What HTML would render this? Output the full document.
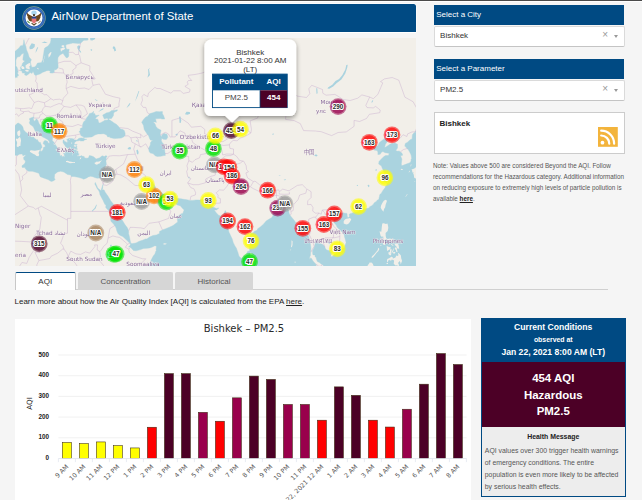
<!DOCTYPE html>
<html lang="en">
<head>
<meta charset="utf-8">
<title>AirNow Department of State</title>
<style>
html,body{margin:0;padding:0;}
body{width:642px;height:500px;overflow:hidden;background:#f5f5f5;position:relative;font-family:"Liberation Sans",sans-serif;color:#222;}
.abs{position:absolute;}
#topbar{left:0;top:0;width:642px;height:1px;background:#4a4a4a;}
#topwhite{left:0;top:1px;width:642px;height:1.2px;background:#fff;}
#hdr{left:14.5px;top:4px;width:401.5px;height:28.4px;background:#004a83;border-radius:2.5px 2.5px 0 0;box-shadow:0 0 0 .6px #fff,0 1.1px 0 0 #fff;}
#hdr .t{position:absolute;left:37px;top:6.1px;font-size:11.4px;line-height:13px;color:#fff;white-space:nowrap;}
#map{left:14.5px;top:38px;width:401.5px;height:228px;background:#f2efe9;overflow:hidden;}
.ph{background:#004a83;color:#fff;font-size:8px;line-height:19.5px;padding-left:2.2px;box-sizing:border-box;white-space:nowrap;}
.sel{background:#fff;border:.6px solid #dadada;border-bottom-color:#c4c4c4;border-radius:2px;box-sizing:border-box;font-size:8px;color:#333;padding-left:5.6px;white-space:nowrap;}
.sel .x{position:absolute;right:16px;top:-.8px;font-size:10px;color:#999;}
.sel .a{position:absolute;right:5.8px;top:8.1px;width:0;height:0;border-left:2.9px solid transparent;border-right:2.9px solid transparent;border-top:3px solid #999;}
#note{left:433px;top:160px;width:195px;font-size:6.3px;line-height:11.1px;color:#555;white-space:nowrap;}
#note b{color:#222;text-decoration:underline;}
.tab{top:272px;height:17.5px;box-sizing:border-box;font-size:8px;line-height:17px;text-align:center;color:#555;background:#d6d6d6;border:.6px solid #d6d6d6;border-bottom:none;border-radius:2px 2px 0 0;}
#learn{left:14.5px;top:296.5px;font-size:8px;line-height:10px;white-space:nowrap;color:#222;}
#learn u{font-weight:normal;}
#chart{left:14.5px;top:318.5px;width:456.5px;height:182px;background:#fff;overflow:hidden;}
#cc{left:481px;top:317.7px;width:144.5px;height:179.6px;box-sizing:border-box;border:.6px solid #004a83;background:#ededed;}
</style>
</head>
<body>
<div id="topbar" class="abs"></div>
<div id="topwhite" class="abs"></div>

<div id="hdr" class="abs">
<svg class="abs" style="left:7.7px;top:2.3px" width="24" height="24" viewBox="0 0 24 24">
<circle cx="12" cy="12" r="11.7" fill="#86a68c"/>
<circle cx="12" cy="12" r="11.1" fill="#2d63b3"/>
<circle cx="12" cy="12" r="9.9" fill="none" stroke="#6f9ad6" stroke-width=".7" stroke-dasharray=".7 .7"/>
<circle cx="12" cy="12" r="8.5" fill="#fdfdfd"/>
<ellipse cx="12" cy="6.7" rx="2.7" ry="2.3" fill="#a9d5ee"/>
<path d="M10.6 10.2 C9 9.6 6.6 8.6 4.9 6.4 C4.6 8.2 5 9.6 5.6 10.6 C5.4 11.6 5.8 12.6 6.5 13.3 C6.6 14.2 7.4 15 8.4 15.2 C9.2 15.6 10 15.4 10.6 14.8Z" fill="#6b471b"/>
<path d="M13.4 10.2 C15 9.6 17.4 8.6 19.1 6.4 C19.4 8.2 19 9.6 18.4 10.6 C18.6 11.6 18.2 12.6 17.5 13.3 C17.4 14.2 16.6 15 15.6 15.2 C14.8 15.6 14 15.4 13.4 14.8Z" fill="#6b471b"/>
<path d="M11 8.6 c.4 -.9 1.6 -.9 2 0 l-.2 1.6 h-1.6z" fill="#3b2a14"/>
<path d="M9.8 11.4 h4.4 v3.4 c0 1.5 -1.1 2.4 -2.2 2.8 c-1.1 -.4 -2.2 -1.3 -2.2 -2.8z" fill="#f5b5b5"/>
<path d="M10.3 12.6 v3.2 M11.15 12.6 v4.3 M12 12.6 v4.8 M12.85 12.6 v4.3 M13.7 12.6 v3.2" stroke="#d8343a" stroke-width=".5"/>
<rect x="9.8" y="10.7" width="4.4" height="1.9" fill="#27408b"/>
<path d="M4.9 14.6 c1.3 .4 2.6 1.5 3.3 2.8 c-1.7 -.1 -3 -1.2 -3.3 -2.8z" fill="#4f8f3f"/>
<path d="M19.1 14.6 c-1.3 .4 -2.6 1.5 -3.3 2.8 c1.7 -.1 3 -1.2 3.3 -2.8z" fill="#9b8a68"/>
<path d="M9.2 17.6 l2.8 2.2 l2.8 -2.2 l-.7 -.9 l-2.1 1.5 l-2.1 -1.5z" fill="#5d4a26"/>
</svg>
<div class="t">AirNow Department of State</div>
</div>

<div id="map" class="abs">
<svg class="abs" style="left:0;top:0" width="401.5" height="228.5" viewBox="14.5 38 401.5 228.5">
<g id="geo">
<path d="M50.4 37.0L50.4 40.3L49.8 42.9L47.5 46.1L44.2 48.0L43.6 50.4L43.2 53.5L42.6 56.5L42.3 59.5L41.0 62.5L39.7 62.8L37.0 63.1L35.4 66.0L33.8 67.1L31.2 67.2L30.9 66.0L30.2 63.4L29.9 61.9L30.9 59.8L28.6 57.1L27.6 53.5L26.0 49.8L25.3 46.1L24.3 44.2L23.4 39.7L23.0 42.9L22.4 45.4L20.1 45.8L18.5 48.0L14.9 51.1L11.6 51.7L11.6 76.7L14.6 76.7L15.2 77.8L15.9 77.2L16.7 77.5L16.8 75.9L18.1 75.6L17.7 74.5L16.8 73.1L17.8 72.2L17.2 70.5L17.0 68.8L16.3 66.8L15.2 66.3L15.4 63.7L15.3 60.4L15.7 59.2L16.8 57.1L19.4 56.5L21.2 54.1L23.4 53.3L23.0 55.0L22.5 58.0L22.4 60.1L24.3 61.0L22.7 62.5L22.1 63.1L21.4 65.4L20.7 66.3L19.8 67.7L20.4 69.4L19.6 70.5L21.4 71.1L21.9 73.1L24.3 73.1L24.2 75.0L26.1 75.4L28.2 74.1L29.6 72.5L31.5 73.4L32.5 71.2L33.5 73.4L33.8 74.5L35.4 75.5L37.0 74.7L39.5 74.0L42.3 72.2L43.9 71.7L46.2 70.7L48.5 70.4L50.1 71.7L49.3 72.2L49.8 73.0L52.0 73.1L53.7 72.5L53.8 69.7L55.6 69.7L57.6 67.7L57.6 65.4L57.4 63.1L57.3 60.7L57.4 57.7L59.1 55.3L62.5 53.2L64.4 55.9L65.7 57.7L67.4 57.4L68.3 55.9L68.2 52.3L68.7 49.3L66.1 49.2L65.4 47.3L65.4 45.8L65.1 45.1L67.0 44.2L69.5 43.8L72.3 43.0L75.2 43.2L78.1 43.5L80.1 43.2L81.4 41.9L83.3 40.3L85.6 40.3L87.6 40.0L87.3 37.0Z M11.6 125.8L14.6 125.6L16.5 123.6L17.9 123.1L20.7 124.7L22.4 127.0L23.0 129.7L25.0 132.1L27.1 133.4L28.7 135.0L30.0 136.3L31.3 137.2L33.1 137.1L34.6 138.9L35.3 138.9L35.6 139.9L36.9 139.6L37.7 141.2L38.7 142.4L39.8 142.3L40.3 143.8L41.1 145.5L41.6 147.6L40.5 148.2L39.8 150.5L40.0 151.2L41.3 151.2L42.8 149.2L42.9 147.6L44.7 146.7L44.5 145.0L42.6 143.8L43.1 141.9L43.9 140.8L45.0 140.5L47.2 141.4L47.5 142.7L48.7 143.4L49.1 141.9L47.5 139.7L45.2 138.4L43.8 137.7L41.0 136.3L41.6 134.3L39.3 134.2L37.7 133.9L35.1 131.8L34.1 129.7L32.8 126.7L30.9 125.3L29.7 124.6L28.8 122.7L29.6 120.8L28.9 119.2L29.1 118.4L31.5 117.5L33.0 116.9L33.7 117.4L32.8 118.1L33.1 119.9L34.1 121.3L35.1 119.9L35.9 118.8L37.4 120.4L38.5 123.6L40.6 126.2L42.4 127.2L44.2 128.3L45.7 129.2L47.8 131.0L49.3 132.1L51.1 133.4L52.0 134.5L52.2 136.8L52.0 138.9L51.7 140.6L53.5 142.3L54.0 143.1L54.7 144.4L56.4 146.9L57.6 149.4L58.4 149.6L57.6 151.5L59.1 152.7L59.4 155.0L59.5 155.8L60.4 156.0L60.8 155.0L61.7 157.2L62.5 156.0L64.1 157.2L63.9 155.0L63.0 153.0L64.4 153.4L65.4 153.2L64.3 151.3L65.7 151.1L67.2 152.3L67.2 150.5L69.0 150.9L67.7 148.4L65.1 146.7L64.8 145.9L63.5 144.2L62.5 142.5L62.5 140.4L63.6 139.8L63.5 141.2L64.9 141.6L66.1 142.8L66.2 141.9L67.0 142.7L66.9 141.2L68.3 141.9L67.0 140.8L66.2 139.5L68.3 138.5L70.6 138.4L73.2 138.9L73.7 139.9L76.2 139.9L74.2 142.3L74.0 142.7L73.7 144.6L75.5 144.4L76.7 144.4L75.7 145.5L76.5 146.9L76.0 148.2L77.1 149.1L75.5 149.4L74.7 148.2L74.5 149.8L76.2 150.7L77.6 151.5L77.5 153.6L78.8 154.0L77.6 154.9L78.1 156.3L80.4 156.0L81.0 155.6L82.0 156.2L83.7 156.5L83.7 157.6L85.5 158.2L87.9 158.0L88.4 156.8L88.9 155.5L91.2 156.0L93.1 156.8L95.7 158.9L99.3 157.8L101.6 155.8L103.9 156.6L105.5 155.6L106.7 156.6L105.5 157.8L105.9 159.3L105.4 161.0L105.8 163.5L105.6 165.2L104.5 167.4L103.6 169.9L102.8 171.6L102.2 174.5L101.1 176.7L99.0 178.1L96.7 178.2L94.1 177.6L92.5 176.7L90.2 176.3L87.7 176.9L86.3 177.9L83.3 179.2L81.1 178.3L77.6 177.3L73.6 176.5L70.8 176.5L70.3 175.0L67.0 174.5L64.1 172.5L62.6 171.8L60.0 171.3L57.1 171.9L54.2 174.3L53.8 177.9L54.7 179.6L52.7 180.9L50.7 181.4L47.5 179.6L42.9 177.9L39.7 176.7L38.4 173.3L35.3 172.3L31.8 171.3L28.2 171.2L26.5 170.3L25.0 169.0L24.7 167.6L21.7 167.4L21.4 165.8L23.8 164.1L24.8 162.3L24.8 161.1L24.1 159.9L23.4 159.7L23.0 157.6L25.0 155.6L24.8 154.7L23.2 155.6L22.4 155.8L21.9 154.2L21.0 153.9L18.8 154.2L17.3 155.2L16.3 155.4L14.6 155.2L11.6 155.2Z M75.8 140.7L78.4 138.3L80.7 137.9L83.2 138.2L84.3 139.1L86.3 139.3L84.3 139.7L83.0 140.9L80.1 141.0L79.4 140.4L77.8 140.8L75.8 141.1Z M83.7 137.3L80.4 135.6L80.1 134.4L79.1 131.9L78.4 131.7L79.8 130.8L79.8 128.5L82.0 127.6L82.0 125.8L82.2 124.2L83.2 121.8L85.5 119.7L85.8 118.3L87.3 116.4L88.2 115.3L89.0 113.6L91.5 112.9L93.1 111.2L92.8 113.4L94.1 113.4L95.1 115.5L98.0 115.3L98.7 115.3L96.4 116.7L94.7 118.8L97.5 119.4L98.0 122.2L98.8 123.1L100.1 122.7L102.9 121.2L104.2 120.2L107.6 119.9L107.8 118.8L106.2 118.3L103.9 119.0L102.9 116.9L102.2 115.0L104.0 114.1L105.8 112.9L108.8 112.2L111.2 110.6L113.7 110.5L115.8 110.0L116.9 109.8L116.6 111.0L114.5 111.7L113.5 112.4L113.0 113.8L113.0 115.5L111.7 117.4L110.7 118.8L108.9 118.4L108.4 119.0L108.6 119.9L108.3 119.9L109.4 120.1L110.4 120.8L112.0 121.8L112.8 122.4L116.2 124.5L118.3 126.8L120.0 129.0L122.5 129.4L123.9 130.8L124.6 133.2L124.6 135.4L123.4 136.7L120.8 138.1L118.3 138.2L114.0 138.6L112.4 138.2L109.4 137.6L109.3 136.7L107.2 136.9L106.2 135.1L103.4 133.7L99.6 133.9L97.4 133.9L94.4 135.0L92.5 136.3L91.2 136.9L87.6 137.3L85.3 137.4Z M145.3 116.9L143.0 119.4L141.2 122.2L143.0 125.4L143.7 129.4L146.3 133.6L148.1 135.8L149.0 138.2L149.8 139.9L152.9 140.8L151.3 141.1L150.0 142.5L149.8 145.0L148.4 147.8L148.1 149.1L148.9 152.1L150.0 153.1L152.5 153.6L154.7 155.8L156.7 156.4L160.4 156.2L163.2 155.6L164.8 155.4L164.7 153.6L164.2 150.9L164.4 147.1L162.2 145.3L163.2 144.0L161.6 142.5L160.8 140.4L161.3 138.2L162.9 139.3L165.8 139.5L167.3 137.3L166.5 134.3L163.5 133.4L161.4 135.0L161.1 137.1L159.8 135.0L159.8 133.4L160.6 130.3L157.2 128.5L155.5 126.5L154.6 124.0L152.8 122.1L154.7 122.0L155.9 122.4L155.4 120.4L155.1 118.8L159.9 118.5L161.6 119.0L164.2 119.0L163.2 115.7L161.9 113.8L161.9 111.5L159.0 111.7L155.7 111.5L152.5 112.7L149.5 113.6L148.2 114.8L146.9 116.4Z M147.7 268.7L147.7 266.4L148.9 264.4L149.7 262.1L151.3 258.8L152.8 255.9L154.4 253.9L155.4 250.9L156.4 250.7L155.5 250.2L155.7 248.3L156.0 246.2L154.4 245.7L151.8 247.1L149.2 247.9L146.6 248.3L143.0 248.4L140.1 249.6L135.5 250.8L132.9 250.4L130.5 247.8L129.5 246.9L128.0 247.1L129.3 245.8L130.0 244.3L129.3 243.1L128.2 242.3L126.4 240.2L124.4 238.6L122.3 236.5L119.9 235.5L118.4 234.5L117.5 233.5L116.3 230.8L115.6 228.1L114.1 225.3L112.2 223.1L110.6 221.4L110.1 219.8L110.1 216.3L109.7 213.9L108.3 210.7L105.2 207.6L105.5 204.7L104.4 204.5L102.6 200.5L100.6 196.8L99.4 194.4L99.1 192.6L98.2 190.6L96.6 188.5L95.3 185.7L94.3 183.9L94.9 182.5L95.4 183.9L96.7 186.7L97.0 187.8L98.4 189.0L100.5 190.8L100.7 190.2L101.3 188.0L101.9 186.1L102.7 184.2L102.2 186.5L102.1 188.4L101.6 189.7L103.6 189.9L104.7 192.2L107.6 196.3L110.2 200.8L112.8 204.1L115.3 207.9L115.9 208.6L116.4 213.2L118.2 216.7L120.2 217.9L122.6 221.5L124.4 224.6L126.7 227.6L127.5 229.1L128.3 232.1L128.0 233.2L128.8 236.2L129.8 241.2L130.4 243.4L132.2 243.6L135.5 242.9L138.8 241.2L142.0 240.2L145.0 238.9L146.4 238.9L149.0 237.1L152.5 235.5L155.9 234.9L159.0 233.5L159.0 231.5L161.9 229.9L165.2 228.7L168.9 227.2L172.5 225.6L177.2 221.9L176.9 219.6L177.4 216.7L180.2 213.9L182.3 213.4L183.7 209.7L182.8 209.3L180.8 206.9L179.7 205.7L176.9 204.9L173.8 203.1L172.5 200.4L172.5 198.6L172.8 195.9L171.8 197.0L171.4 198.1L169.1 199.8L166.1 202.7L163.5 204.0L160.3 203.8L157.0 204.0L156.0 202.4L156.9 200.8L156.9 199.7L157.0 197.5L155.9 196.6L154.6 198.6L154.4 201.1L154.2 201.9L152.5 199.0L152.5 196.1L151.8 194.6L150.5 193.3L148.2 191.0L147.1 188.4L145.9 186.1L145.3 184.8L144.5 184.7L145.6 183.9L145.9 182.6L147.1 182.6L148.4 181.3L149.2 180.7L150.5 182.2L152.5 182.6L152.8 183.9L154.6 186.3L156.0 190.4L158.2 190.5L160.3 191.9L162.9 194.1L166.0 195.0L167.8 195.2L170.1 194.4L172.2 192.9L174.3 193.2L174.9 195.0L175.6 197.4L177.1 198.4L180.5 198.8L183.1 199.3L186.4 199.7L189.3 200.4L192.0 200.4L195.7 199.9L199.4 200.1L202.3 199.3L204.9 199.2L206.1 199.3L206.2 201.3L207.2 201.5L208.5 203.3L209.2 204.7L211.1 205.8L212.4 207.0L216.0 208.6L217.3 208.3L218.3 208.1L216.0 209.9L213.7 210.0L215.7 212.7L218.1 215.3L220.3 216.0L222.5 215.0L224.0 212.3L224.8 210.6L225.8 212.7L226.1 214.4L226.3 217.0L226.0 219.8L226.2 222.1L226.8 225.3L227.8 228.7L228.4 232.1L229.4 234.0L230.4 236.2L231.7 238.9L232.8 242.7L234.4 246.0L235.8 248.1L236.6 250.2L237.4 252.4L238.4 255.9L239.7 257.5L241.6 258.6L243.6 256.2L246.3 254.7L247.3 254.5L246.2 253.4L247.3 251.2L249.2 251.2L249.1 249.7L249.0 245.8L250.5 242.0L250.1 238.9L249.8 235.5L250.4 233.2L252.5 233.0L253.5 231.5L257.1 230.1L256.9 228.9L260.4 226.4L263.1 224.1L265.6 221.0L268.7 219.1L271.4 217.4L272.4 215.7L272.4 213.4L274.9 212.7L276.0 212.5L278.6 212.9L280.9 212.3L283.2 212.0L284.5 210.0L285.5 209.3L287.1 209.3L288.1 210.4L288.7 213.4L289.9 215.8L291.7 217.9L293.8 220.5L295.2 222.6L296.4 224.3L296.5 227.0L297.0 229.4L296.1 232.1L297.8 232.8L300.1 233.2L302.4 231.5L304.4 229.1L305.0 227.9L305.7 229.6L307.0 230.5L307.3 234.5L308.6 238.6L309.9 244.1L310.4 247.9L310.1 252.2L309.9 255.5L309.1 257.2L309.3 259.5L310.2 257.8L311.2 258.8L312.5 261.1L313.8 262.6L315.1 263.8L315.5 264.7L315.9 266.4L315.9 268.7Z M323.6 268.7L323.6 266.4L322.0 264.7L320.7 263.9L318.9 262.5L316.8 261.5L315.8 258.8L315.6 257.2L314.6 256.9L314.5 254.9L312.5 254.9L312.2 253.7L312.0 250.6L313.3 248.3L314.1 246.3L314.6 243.8L314.8 241.6L315.8 240.6L316.8 240.5L317.9 241.1L317.6 242.5L317.7 243.4L319.0 243.4L321.6 244.1L323.1 245.3L324.3 246.8L324.9 248.6L326.2 250.1L328.5 250.4L329.5 250.9L331.4 252.2L330.6 254.5L330.4 256.5L330.2 256.9L332.1 256.2L333.5 254.7L335.3 253.6L336.8 251.9L337.0 251.1L337.9 251.1L339.6 250.4L341.2 249.2L344.0 247.8L344.1 247.0L344.8 244.8L345.6 242.6L344.9 239.7L344.1 236.9L343.8 235.0L341.7 231.9L339.6 230.3L336.5 227.0L335.7 225.0L333.5 222.6L334.0 219.1L335.0 218.4L336.3 217.4L337.0 215.7L337.9 215.1L338.9 214.8L340.9 213.2L342.8 212.7L344.5 213.3L346.1 213.2L346.6 213.9L346.6 215.3L347.1 217.5L348.1 217.6L349.0 216.5L348.7 214.3L350.0 213.6L350.7 213.4L353.3 212.5L356.5 212.0L357.8 211.3L359.0 210.7L359.1 208.8L360.1 209.7L361.1 210.4L362.4 209.2L364.8 208.7L368.6 208.1L369.2 206.7L371.2 205.8L372.5 204.7L373.8 202.8L375.8 201.5L376.7 200.2L378.4 199.2L378.7 197.2L378.9 196.8L379.3 194.6L380.7 193.5L381.8 191.5L382.8 189.9L384.7 187.6L385.2 185.8L386.4 185.0L386.5 183.0L385.1 182.2L382.9 181.3L384.2 179.8L386.2 179.1L384.9 177.1L386.2 175.9L385.2 174.5L383.9 173.1L383.1 171.3L381.6 167.8L381.0 166.0L378.2 164.1L378.5 161.5L381.1 158.8L383.7 156.2L385.1 155.6L387.9 155.5L388.8 153.4L386.8 153.0L384.6 152.7L382.4 151.6L381.0 152.3L379.7 154.2L377.4 154.6L377.4 151.9L376.6 150.5L373.5 150.1L373.0 149.4L372.7 146.7L375.1 146.7L377.4 145.7L378.7 142.8L382.8 139.5L383.6 138.9L385.9 138.6L386.8 139.7L386.8 141.6L384.9 144.2L384.1 147.6L385.4 147.1L389.8 144.0L394.2 143.1L397.0 144.2L397.0 148.0L395.2 150.5L397.3 151.3L398.6 150.9L401.5 153.2L402.2 155.2L400.0 155.8L401.4 159.1L400.8 163.9L401.2 165.8L405.3 164.3L405.8 164.1L409.5 162.7L410.6 161.1L410.6 159.1L411.2 158.7L410.6 155.0L409.7 153.0L409.0 151.8L408.0 150.1L404.3 146.1L404.8 143.4L406.7 142.4L410.0 139.6L411.6 138.9L411.9 134.8L413.6 132.8L414.9 132.5L415.2 131.0L415.9 130.8L419.1 129.9L419.1 268.7Z" fill="#aad3df" stroke="#aad3df" stroke-width=".4" stroke-linejoin="round"/>
<path d="M75.8 140.8L74.2 142.5M83.3 138.2L83.7 137.1" stroke="#aad3df" stroke-width=".8" fill="none"/>
<path d="M25.0 65.4L26.9 63.9L28.9 63.1L29.9 63.5L29.9 65.5L28.6 66.8L29.4 68.0L28.9 69.6L26.9 68.8L25.3 68.3Z M20.7 66.5L22.4 65.9L24.0 67.7L23.7 69.1L21.7 69.0L20.9 68.0Z M24.7 70.3L26.3 69.7L28.2 70.0L27.8 71.8L26.0 71.5L24.7 70.8Z M36.7 67.8L38.2 68.6L38.0 69.4L36.7 68.8Z M42.3 62.5L42.8 62.2L44.5 55.6L44.1 55.9Z M47.8 57.7L48.8 57.0L50.1 55.0L51.1 52.3L49.8 52.3L47.8 54.7L48.1 57.1Z M59.9 48.6L60.5 51.7L61.5 50.4L63.8 49.5L64.8 48.0L63.5 47.6L61.2 48.3Z M60.7 46.1L62.5 44.9L63.9 45.8L63.5 47.2L61.8 47.2Z M19.3 129.4L19.6 130.8L19.9 133.4L19.4 135.6L18.7 136.6L17.5 135.8L16.8 134.3L16.7 132.3L17.3 131.3L18.5 130.6L19.2 130.8Z M18.8 137.1L19.9 137.8L20.6 140.4L20.2 142.5L19.9 146.1L18.5 145.9L17.7 147.2L16.3 146.5L16.2 145.0L16.7 142.9L16.2 141.2L15.4 139.9L15.5 138.4L16.8 138.9L17.8 138.2Z M29.6 150.7L30.4 150.3L32.3 150.4L34.4 150.8L37.4 150.3L39.5 149.8L38.7 151.5L38.0 153.0L38.7 154.8L38.0 156.3L36.1 155.9L34.3 154.6L33.0 153.9L30.9 152.7L29.3 151.7Z M65.6 161.1L65.4 162.1L67.0 162.3L69.5 163.3L71.9 163.1L74.4 163.1L74.5 161.9L72.7 162.3L71.8 161.9L70.7 161.7L68.7 161.6L67.4 160.8L66.2 161.0Z M94.0 162.7L94.4 164.1L96.4 164.8L98.5 163.6L99.9 163.2L99.5 162.5L101.6 160.3L98.5 161.6L97.4 161.7L96.2 161.5L94.9 162.4Z M79.2 159.5L79.6 157.8L80.8 157.2L80.4 158.7Z M73.1 145.9L74.2 145.1L75.5 145.5L75.4 146.7L73.9 146.5Z M73.1 148.6L74.0 148.5L73.9 150.1L73.2 149.9Z M55.1 149.6L56.0 149.0L56.6 150.3L55.6 150.7Z M52.9 143.6L53.8 143.4L54.3 145.0L53.5 144.8Z M70.5 142.7L71.6 142.5L71.6 143.4L70.6 143.4Z M75.5 151.7L77.0 151.9L76.7 152.3L75.5 152.2Z M71.4 154.4L72.3 154.4L72.1 155.2L71.6 155.2Z M69.3 151.1L70.1 151.3L70.0 152.1L69.5 151.9Z M76.8 155.6L77.8 155.5L77.8 156.0L76.8 156.2Z M68.8 139.3L69.6 139.2L69.5 139.9L68.8 139.9Z M249.1 253.1L250.4 252.8L252.4 254.9L253.6 257.0L255.1 259.8L255.7 262.1L255.0 263.9L253.3 265.0L251.4 265.6L250.3 265.3L249.5 263.5L249.1 262.4L249.0 260.5L248.8 258.2L249.3 255.9L249.8 254.2Z M162.6 243.8L164.2 243.3L166.5 243.8L164.8 244.5L163.2 244.4Z M291.0 240.2L292.1 241.2L292.0 244.9L291.3 247.3L290.5 246.9L291.0 243.9Z M290.0 249.2L290.7 249.7L290.3 250.6L289.9 250.2Z M294.3 261.5L295.1 261.8L294.8 262.9L294.1 262.5Z M179.8 216.2L181.0 216.7L180.2 217.9Z M153.3 196.3L153.9 196.4L153.8 197.9L153.4 197.7Z M169.1 195.0L171.0 193.7L172.3 193.7L171.0 194.6Z M419.1 167.2L415.4 167.2L413.9 168.6L412.5 169.1L411.0 169.6L411.6 170.5L411.9 172.5L413.3 172.5L412.6 173.6L413.3 174.8L413.6 177.6L414.8 178.6L419.1 176.9Z M343.2 221.2L343.2 223.6L345.8 224.6L347.6 224.0L349.0 222.6L350.8 219.6L349.5 217.9L347.7 218.4L345.9 218.8L344.8 219.3L343.8 220.2Z M385.1 199.7L386.5 200.8L386.0 202.2L385.2 204.4L384.6 207.6L383.7 208.8L382.8 211.8L382.3 211.1L381.0 209.3L380.2 207.7L380.5 205.8L381.3 204.0L382.3 202.2L383.3 200.8L384.6 200.1Z M381.8 223.6L383.3 223.2L385.4 224.1L387.0 223.6L387.5 225.7L387.8 227.7L387.2 231.1L385.1 233.0L385.2 235.9L385.7 238.2L387.2 239.1L389.5 238.6L390.8 238.9L392.9 239.7L391.7 241.1L393.4 242.3L393.4 243.8L392.6 242.8L390.8 242.3L389.8 240.6L388.6 241.6L387.7 240.2L385.2 239.2L383.4 240.2L382.0 239.4L382.0 237.9L382.9 237.4L383.2 236.9L382.0 236.2L381.6 237.4L380.8 236.2L380.2 236.0L379.7 234.3L379.3 232.5L379.2 231.1L380.7 232.0L381.0 230.1L381.3 226.9L381.5 225.3Z M381.0 240.6L383.3 240.6L384.9 241.9L385.1 243.6L384.1 244.9L382.6 244.6L382.4 242.6Z M370.9 257.5L372.2 257.7L374.5 254.9L375.9 253.1L377.7 251.2L378.7 249.6L378.5 247.8L377.7 248.3L377.1 250.2L375.4 252.2L373.5 254.5L371.8 255.9Z M379.5 244.9L381.0 245.1L380.8 245.8L379.7 245.6Z M386.2 245.9L388.5 247.1L390.3 247.3L389.8 249.1L388.3 249.9L386.5 250.9L386.4 248.9Z M389.6 249.2L391.2 249.2L390.9 251.2L390.3 253.6L390.8 254.5L389.8 255.4L388.1 254.2L387.8 252.6L389.3 251.9L389.5 250.6Z M393.2 248.0L393.0 250.6L392.7 251.2L391.1 254.1L391.1 252.6L391.9 250.9L392.6 248.9Z M392.4 252.6L393.7 251.7L395.0 252.4L394.3 253.6L392.7 253.6Z M394.5 247.3L396.3 248.1L396.5 249.7L397.1 252.2L395.5 251.6L395.5 250.1L394.3 248.9Z M394.0 243.8L397.3 243.6L398.1 245.3L398.7 248.8L397.0 248.6L396.3 247.8L395.8 246.3L394.5 245.3Z M390.4 243.8L391.7 244.3L393.2 245.9L391.7 245.6L390.6 244.6Z M386.7 262.5L386.4 261.1L386.8 259.0L388.6 258.3L390.9 256.8L392.1 256.9L392.4 258.5L393.9 258.0L395.2 257.2L395.6 255.5L396.8 256.0L397.9 255.5L397.6 253.1L398.1 252.9L399.6 254.5L400.4 255.5L400.7 258.2L401.4 260.2L401.5 261.1L400.2 264.4L399.9 262.5L399.1 261.0L398.3 262.0L397.6 263.1L398.4 264.7L398.1 268.7L397.3 268.7L397.0 265.2L395.0 265.4L393.2 263.8L393.5 261.6L393.4 260.2L391.2 259.5L390.8 260.5L389.3 260.5L389.1 259.7L388.1 260.0L387.7 261.3Z M385.9 263.3L387.5 263.1L387.5 263.9L386.0 263.9Z M367.0 268.7L367.1 265.4L368.6 263.4L369.4 262.3L370.2 262.8L371.0 262.5L372.5 264.1L372.7 265.4L373.8 265.9L375.4 266.7L376.1 268.7Z M400.0 169.8L401.2 168.8L402.7 169.2L401.5 170.1Z M410.0 166.4L410.5 166.2L411.0 164.3L410.3 164.5Z M404.9 196.8L405.4 196.8L407.1 194.1L406.6 194.1Z M408.0 172.5L409.0 172.1L409.7 170.5L408.9 170.9Z M413.9 180.9L414.7 180.9L414.6 181.6L413.9 181.6Z M415.4 180.9L416.0 179.4L416.2 180.1Z M384.2 175.8L386.2 176.5L385.2 176.7Z M386.4 182.0L387.5 181.8L387.5 182.6L386.5 182.6Z" fill="#f2efe9"/>
<path d="M28.9 47.0L31.2 43.2L34.4 44.2L34.1 47.0L31.8 48.9L29.2 49.2Z M35.1 53.0L36.4 50.4L37.7 47.6L36.7 47.3L35.4 50.4Z M41.0 42.6L44.2 41.6L47.2 42.9L44.2 42.9Z M76.7 46.4L78.3 45.3L79.9 46.4L78.8 49.5L80.4 51.4L80.7 52.6L79.8 52.6L78.3 50.4L77.0 48.6Z M89.5 37.0L89.9 40.3L91.8 40.6L94.4 39.3L95.1 37.0Z M89.9 49.8L90.8 48.9L91.8 50.1L90.8 51.1Z M112.0 48.0L113.3 46.1L114.6 47.3L115.6 50.4L114.0 51.4L113.3 49.2Z M326.9 88.5L328.8 88.8L332.7 86.4L336.0 83.2L340.9 79.4L344.8 73.4L346.7 67.7L347.2 64.8L345.8 65.1L344.8 69.4L341.9 75.0L338.6 78.9L335.0 81.0L331.8 84.8L327.8 87.2Z M316.1 93.9L317.1 93.2L316.8 88.5L315.8 88.0L315.8 91.1Z M289.7 94.2L291.3 93.4L293.0 94.7L291.3 95.7Z M228.4 119.0L228.1 116.7L230.7 114.3L233.3 111.9L236.6 112.2L239.8 112.9L243.1 113.1L247.0 112.9L247.0 114.1L243.1 114.3L239.8 114.1L236.6 113.6L234.0 113.4L231.7 116.2L230.0 119.0Z M237.2 131.9L239.8 130.6L244.1 130.6L244.1 132.3L239.8 133.4Z M253.8 114.8L255.5 113.8L256.4 115.7L254.8 116.2Z M260.0 106.2L262.6 105.2L265.6 106.4L262.6 107.4Z M184.4 114.3L186.0 111.7L189.3 111.9L189.6 113.8L187.0 114.8Z M178.5 116.7L179.8 116.2L180.8 120.4L180.2 123.1L179.0 122.7L178.9 119.4Z M127.0 148.4L128.7 146.9L130.6 147.4L130.3 149.2L128.3 149.4Z M135.8 150.5L137.1 149.6L138.1 152.1L137.8 154.2L136.5 154.2L136.2 152.1Z M135.5 139.9L136.8 140.4L137.5 141.6L136.2 141.4Z M97.0 146.7L98.3 146.9L98.0 148.4L97.4 148.2Z M104.4 175.8L104.9 175.8L104.7 178.2L104.2 178.0Z M95.7 204.7L96.4 204.7L95.1 208.6L91.8 211.4L91.2 211.1L94.1 207.9Z M109.4 245.6L110.6 244.6L111.4 245.6L110.4 246.8Z M34.1 240.9L36.1 240.9L36.7 242.6L34.8 243.1Z M313.5 155.4L315.5 154.2L317.2 155.4L315.8 156.6Z M326.5 241.4L327.5 241.2L329.5 243.6L328.8 244.3L327.8 242.9Z M379.7 177.5L381.0 176.7L382.0 178.0L380.7 178.8Z M367.0 185.0L368.3 184.7L369.2 186.1L367.9 187.3Z M355.9 186.1L357.5 184.7L357.5 186.1Z M370.9 102.2L371.8 100.2L372.8 100.7L371.5 102.7Z M126.0 108.1L128.7 105.7L130.0 103.2L129.0 103.2L127.3 105.7Z M134.5 101.7L137.1 96.2L138.8 91.1L138.1 91.1L136.2 96.2Z M146.9 77.8L149.5 75.0L148.5 69.4L149.5 67.7L147.6 69.4L147.9 73.9Z M97.7 111.9L100.3 109.5L103.2 108.1L102.6 109.5L99.6 111.0Z M94.1 98.7L95.7 99.7L97.4 101.0L95.4 100.5Z M283.2 179.8L285.1 179.2L285.5 180.1L283.8 180.3Z M278.0 175.6L279.9 175.2L279.6 176.1Z M374.8 169.8L376.1 169.0L376.4 170.5L375.1 170.7Z M271.4 133.9L273.4 133.4L273.4 134.5L271.8 134.5Z M187.7 177.1L189.0 176.7L188.6 179.0Z M174.9 134.3L176.9 133.4L177.2 135.2L175.6 135.6Z M205.6 138.6L208.8 138.2L210.5 139.1L207.2 139.5Z" fill="#aad3df"/>
<path d="M35.4 75.6L35.7 78.9L34.9 81.3L36.6 82.9L36.9 88.5L37.7 91.6 M37.7 91.6L35.4 91.6L31.2 93.9L28.6 94.7L29.6 96.7L33.8 102.5 M37.7 91.6L41.0 92.9L43.9 94.7L46.5 94.7L50.3 98.7 M33.8 102.5L37.7 101.2L43.9 102.7 M43.9 102.7L47.5 100.7L50.3 98.7 M33.8 102.5L31.2 108.6L28.6 107.9L23.0 108.6L20.1 108.6L16.5 108.1L13.6 108.1 M17.2 70.0L19.6 70.5 M11.6 116.2L16.2 113.8L18.1 116.4L19.8 114.3L22.9 113.1L22.9 111.7L28.6 111.0L29.2 112.4L33.5 113.3L33.1 116.7 M20.1 108.6L19.9 110.7L22.9 111.7 M33.5 113.3L37.7 112.8L41.3 111.7L42.6 108.6L44.5 106.2L43.9 102.7 M44.5 106.2L50.1 107.1L53.7 105.4L58.6 103.5L61.0 104.2L62.3 100.7 M50.3 98.7L53.3 100.2L54.3 99.5L59.2 99.2L62.3 100.7L62.8 98.2L67.4 93.2L65.7 88.5L65.7 85.3L66.7 82.1L65.4 75.3L63.1 73.0L53.3 72.5 M63.1 73.0L62.5 69.1L58.2 68.0 M65.4 75.3L68.3 75.6L72.6 73.4L72.3 70.0L75.5 67.7L75.5 65.6L80.6 62.8L79.1 55.3L78.0 54.4L78.4 50.4L80.1 42.9 M57.4 63.2L63.5 61.3L70.0 61.3L75.5 65.6 M68.2 52.5L72.3 52.3L75.2 54.7L78.0 54.4 M80.6 62.8L89.5 66.0L89.2 70.5L94.7 78.9L91.2 79.4L92.5 85.3 M65.7 88.5L70.3 86.4L78.4 88.5L84.0 88.0L88.6 89.5L92.5 85.3L99.0 84.0L104.9 94.2L112.7 96.7L119.5 98.2L118.5 103.2L118.5 106.6L113.7 108.3L113.3 110.5 M75.5 104.9L80.7 105.2L83.8 106.4L86.3 111.9L86.9 113.8L80.7 118.3L85.5 119.4 M75.5 104.9L78.4 108.6L80.4 111.9L80.7 118.3 M61.0 104.2L63.5 106.4L70.0 107.4L75.5 104.9 M63.5 106.4L57.9 113.8L54.8 115.1L50.4 116.1L45.8 116.0L42.6 113.4L41.3 111.7 M33.1 118.1L38.7 118.1L39.8 114.8L42.6 113.4 M40.1 119.4L43.9 119.2L50.4 120.4L50.7 121.1L52.0 124.0L51.4 127.2L48.9 131.4 M40.1 119.4L40.1 121.3L46.2 129.4L48.9 131.4 M50.4 116.1L50.7 121.1 M54.8 115.1L58.6 119.4L62.1 121.8L62.6 124.0L63.5 125.6L71.9 126.5L77.5 124.5L82.0 126.1 M62.6 124.0L61.8 129.4L61.7 132.5L63.5 136.7L68.7 136.0L74.7 135.2L80.1 133.9 M51.4 127.2L55.0 130.1L54.3 131.4L52.7 131.4L51.9 134.4 M54.3 131.4L56.0 134.4L55.6 136.9L57.1 138.9L54.0 143.8 M56.0 134.4L59.2 132.8L61.7 132.5 M55.0 130.1L57.9 128.5L59.2 132.8 M57.1 138.9L63.5 136.7 M74.7 135.2L75.5 136.9L73.7 139.3 M25.0 44.8L27.3 40.3L29.6 36.4 M119.2 127.6L127.3 128.5L132.2 131.2L140.1 134.3L143.0 136.9L147.2 134.5 M124.3 136.0L127.7 135.8L130.4 137.8L135.5 137.1L140.4 137.8L140.1 134.3 M130.4 137.8L131.3 142.1L134.8 143.8L133.2 149.2L134.8 154.2L127.0 154.6L119.2 155.8L112.7 155.6L108.4 156.2L106.8 159.1L105.9 159.3 M135.5 137.1L137.5 139.1L138.8 145.5L140.4 147.1 M134.8 143.8L140.4 147.1L145.3 143.8L148.2 149.0 M127.0 154.6L123.1 163.9L115.3 169.5L108.8 173.6L105.3 171.9 M106.1 164.5L108.1 166.2L105.7 169.4L103.2 170.5 M104.9 172.1L104.5 176.7L102.9 184.1 M100.5 177.5L102.6 184.3 M115.3 169.5L116.6 174.2L109.4 176.7L112.7 180.5L111.0 182.4L106.2 185.4L102.9 184.8 M116.6 174.2L120.5 175.0L126.0 178.2L134.5 185.4L140.4 185.8L143.7 187.8L146.6 187.8 M140.4 185.8L144.3 182.0L145.3 182.4 M134.8 154.2L136.8 159.1L139.4 162.7L136.8 167.0L138.8 170.9L145.0 175.6L144.3 178.6L147.1 182.6 M128.3 230.8L129.6 227.4L132.9 227.4L140.4 227.9L143.7 228.7L148.5 223.3L158.3 221.9L168.1 218.4L170.2 211.4L168.8 209.0L160.3 208.1L157.0 204.0 M154.4 201.7L155.7 202.2 M168.8 209.0L170.7 203.7L171.7 201.7L172.5 201.0 M158.3 221.9L161.9 229.9 M164.5 153.6L167.4 153.4L171.4 150.5L175.3 149.9L179.2 152.3L182.1 153.0L185.4 156.4L188.1 156.4L188.3 160.7L186.4 165.8L187.3 169.0L186.2 171.3L187.2 176.7L190.3 178.6L187.2 182.9L190.3 187.6L193.5 188.9L195.2 192.8L194.8 195.0L190.4 196.4L189.6 200.1 M187.2 182.9L192.6 184.7L197.8 184.7L204.9 182.8L205.3 179.0L210.5 176.3L214.7 175.2L215.4 170.9L218.0 169.8L217.0 167.0L220.6 166.8L222.2 162.3L220.9 159.1L225.2 155.8L230.0 155.6L233.0 154.2 M188.3 160.7L191.9 162.3L194.5 159.7L199.1 157.8L200.0 154.6L205.6 153.6L209.8 154.2L214.7 154.6L217.7 152.5L218.0 149.2L221.2 149.6L222.2 155.0L226.1 154.0L233.0 154.2 M205.6 153.6L205.9 150.9L198.1 146.7L192.2 142.5L190.6 137.3L184.7 136.5L184.4 133.0L179.5 130.8L174.6 136.9L171.4 136.9L169.7 137.1L167.9 133.9L164.8 132.3L159.8 135.0 M171.4 136.9L171.4 120.4L179.8 117.8L187.7 123.1L190.9 127.2L200.4 126.3L204.3 129.4L204.0 133.9L205.6 134.3L210.2 137.6L210.8 139.1L213.7 136.9L217.7 133.9L220.3 132.5L220.3 131.2L228.4 132.1L228.4 129.4L231.0 128.5L235.9 129.9L247.0 130.3L250.4 133.0 M250.4 133.0L244.4 136.5L239.5 138.2L236.6 140.8L232.6 140.4L229.4 143.4L228.9 144.8L229.4 148.4L233.0 149.0L233.0 154.2 M228.9 144.8L222.9 145.5L218.6 144.2L214.7 144.6L214.7 141.6L218.6 141.2L218.3 138.2L222.5 136.3L227.1 138.9L222.5 141.6L219.0 141.6 M209.8 154.2L210.5 150.1L211.8 150.1L209.5 146.7L208.5 144.6L212.4 144.2L212.4 141.9L214.7 141.6 M220.3 132.5L218.3 138.2 M149.2 114.1L146.9 112.7L145.3 107.4L142.7 107.4L140.4 104.2L142.0 100.2L141.4 96.7L143.3 94.4L147.2 96.7L147.9 93.2L154.4 87.4L156.4 88.5L159.6 88.5L163.2 90.1L166.8 91.6L170.4 93.2L173.0 90.8L179.8 90.8L182.8 93.4L189.0 92.1L189.6 89.5L184.4 86.4L187.7 84.3L186.7 82.1L188.0 80.5L191.2 80.5L188.3 77.2L187.7 75.3L194.5 74.5L201.4 73.1L211.1 69.4L219.6 67.7L220.3 74.5L228.4 75.0L230.0 77.2L238.2 73.9L239.5 72.8L242.8 78.9L249.6 92.1L254.5 92.4L260.7 91.1L266.6 98.2L271.8 97.2L273.6 100.7 M273.6 100.7L268.5 104.2L267.5 110.7L259.4 110.0L257.1 118.1L252.2 119.9L249.6 120.8L250.9 129.2L250.4 133.0 M273.6 100.7L275.0 100.2L281.2 96.7L289.7 92.1L297.2 96.2L306.0 97.5L309.3 93.7L308.3 88.8L311.2 85.3L322.0 89.5L322.3 93.2L325.6 95.2L334.4 94.4L337.6 96.2L342.5 99.5L349.7 100.5L357.2 98.2L361.4 94.9L369.2 97.0 M275.0 100.2L277.6 105.2L282.2 106.6L285.5 112.9L285.1 119.4L293.6 120.6L299.8 123.6L303.1 130.6L314.8 131.0L320.7 131.7L331.1 135.6L337.6 132.5L345.8 131.9L353.6 126.3L353.6 120.4L359.1 121.5L366.0 118.5L368.9 114.3L379.3 112.7L379.7 110.0L375.1 106.4L372.8 107.9L366.6 107.6L365.3 105.4L369.2 97.0 M369.2 97.0L372.8 98.7L377.4 94.4L380.3 87.4L382.3 82.9L380.0 81.6L383.9 78.9L391.7 77.5L398.3 80.2L404.4 97.2L412.6 101.7L415.9 107.6L420.8 107.6 M415.9 120.4L416.5 127.2L414.6 131.9 M394.2 142.5L399.6 138.2L402.5 134.7L406.4 136.5L407.1 133.9L411.6 131.9L414.6 131.9 M399.9 151.9L402.8 149.6L407.2 148.4 M340.9 213.0L336.6 211.4L336.3 208.3L332.1 206.7L327.8 209.7L321.8 210.0L320.7 214.3L318.5 213.0L315.1 213.2L312.2 211.1L312.5 207.6L310.6 204.4L307.0 204.7L307.3 200.8L310.6 197.5L310.6 191.7L306.6 189.1 M306.3 189.1L301.8 184.7L296.9 185.4L288.7 190.6L287.4 190.6L282.2 189.1L278.9 191.7L278.3 189.9L276.0 190.2L270.8 189.9L266.9 188.7L262.6 186.9L259.4 185.0L254.5 181.1L252.9 181.6L247.0 177.9L245.4 172.9L248.0 171.9L246.0 169.4L245.7 165.8L243.1 161.1L242.4 161.1 M252.9 181.6L249.9 186.9L252.9 188.7L258.4 191.3L262.6 191.9L266.9 194.4L269.2 195.0L273.4 195.7L276.0 195.5L276.0 190.2 M233.0 154.2L235.9 156.2L239.2 160.5L242.4 161.1 M242.4 161.1L239.8 163.1L234.9 164.6L230.0 164.3L229.4 165.8L230.0 170.1L232.0 171.9L234.4 173.6L232.0 175.2L231.7 178.2L229.7 180.9L226.6 186.1L223.2 190.2L219.0 189.9L215.7 192.8L217.7 195.2L217.3 197.5L219.9 198.6L219.9 203.1L213.1 203.3L211.1 205.4 M276.0 195.5L277.3 195.5L278.9 196.1L281.5 196.6L281.7 199.7L290.0 200.6L289.4 203.7L286.1 204.0L287.1 207.9L288.1 207.2L289.7 205.4L290.7 213.9L289.7 215.3 M276.0 195.5L276.0 197.9L278.6 200.1L276.2 202.2L278.0 203.3L278.1 207.2L279.1 210.9L279.3 212.5 M290.7 211.4L292.6 210.6L293.3 204.4L297.5 199.7L299.2 195.0L305.3 193.2L306.3 189.1 M278.6 192.4L278.9 194.1L283.8 194.3L289.0 194.1L288.7 191.7 M318.5 213.0L315.1 217.2L313.2 217.2L308.3 219.1L307.5 224.0L306.3 223.4L307.6 227.0L310.2 231.1L308.9 234.9L312.2 241.6L313.7 246.3L310.9 250.9L310.7 252.2 M315.1 217.2L316.6 220.2L318.9 220.0L318.1 226.2L321.6 224.6L323.4 225.8L327.8 224.3L330.3 227.4L330.3 230.5L333.1 233.5L332.9 237.6L331.8 237.9L324.6 237.9L323.1 240.1L322.6 242.3L324.3 246.8 M331.8 237.9L334.4 237.7L339.4 236.5 M321.8 210.0L324.3 212.9L324.6 214.6L327.8 215.3L329.8 217.0L330.9 218.4L327.8 219.6L328.2 221.2L331.8 223.1L333.1 226.4L336.0 228.9L339.2 232.1L339.4 236.5L338.9 244.6L335.7 245.8L333.9 246.9L335.0 249.4L331.4 249.1L329.3 250.8 M315.3 263.9L318.4 266.4L320.7 266.1L321.6 264.6 M70.8 176.3L69.8 180.5L70.3 185.2L70.3 211.4L91.2 211.4L109.1 211.4 M70.3 211.4L70.3 218.4L67.0 218.4L67.0 220.2L41.0 206.3L37.7 207.9L35.1 209.3L32.8 207.4L27.8 206.1L19.8 195.7L21.1 189.9L19.8 181.6L22.4 179.0L21.7 176.3L26.3 172.9L26.5 170.3 M19.8 181.6L18.3 174.4L13.2 167.8L15.9 164.3L15.9 157.0L16.8 155.2 M27.8 206.1L13.2 215.5L7.7 220.2 M37.7 207.9L39.5 215.0L40.8 217.2L39.3 229.1L33.1 237.2L32.8 239.9L29.6 241.9L21.4 241.4L14.9 241.2L11.6 242.3 M32.8 239.9L34.8 241.9L35.1 244.3L36.4 247.3L32.2 251.9L28.6 257.5L26.3 263.4L21.4 262.5L17.5 268.7 M35.1 244.3L37.9 245.3L38.0 249.6L39.3 252.4L34.4 252.2L38.4 260.5L36.4 264.7L36.1 268.7 M38.4 260.5L42.6 259.8L49.4 258.5L50.7 256.2L57.3 253.1L62.1 249.1L63.5 249.1 M67.0 220.2L67.0 233.2L63.5 233.8L61.2 240.6L60.0 243.3L62.1 245.3L63.5 249.1L66.1 252.6L67.7 256.5L71.3 259.5L74.9 263.4L78.1 268.4 M67.7 256.5L70.3 251.2L75.5 253.9L80.1 254.4L85.0 251.9L89.2 253.1L94.4 246.6L94.1 244.9L97.0 244.9L96.7 249.9L99.3 251.6 M99.3 251.6L100.0 256.9L96.4 259.2L99.6 261.3L102.9 265.4L105.8 270.0 M99.3 251.6L100.8 250.1L103.2 246.3L106.6 243.3L107.6 238.1L109.4 228.6L114.6 225.3 M107.6 238.1L112.4 235.9L115.9 236.9L119.2 237.4L122.5 240.2L127.0 244.1L129.3 243.3 M127.0 244.1L124.9 247.3L128.3 249.1L129.8 247.4 M128.3 249.1L128.7 252.2L132.2 255.5L142.0 258.8L145.3 258.8L135.5 268.7" fill="none" stroke="#c3a6cb" stroke-width=".55" stroke-opacity=".75" stroke-linejoin="round"/>
</g>
<g font-family="'DejaVu Sans','Noto Sans CJK SC',sans-serif" fill="#7c5a92" text-anchor="middle" stroke="#f7f4f0" stroke-width=".7" paint-order="stroke" opacity=".9">
<text x="79.3" y="79.4" font-size="5.7">Беларусь</text>
<text x="99.4" y="106.6" font-size="5.7">Україна</text>
<text x="14.5" y="92.4" font-size="5.7" text-anchor="start">utschland</text>
<text x="68.4" y="118.0" font-size="5.7">România</text>
<text x="34.6" y="136.3" font-size="5.7">Italia</text>
<text x="65.3" y="152.2" font-size="5.7">Ελλάς</text>
<text x="104.9" y="148.0" font-size="5.7">Türkiye</text>
<text x="191.3" y="106.8" font-size="5.8" text-anchor="start">Қазақстан</text>
<text x="179.2" y="138.7" font-size="5.8" text-anchor="start">O‘zbekiston</text>
<text x="180.3" y="149.0" font-size="5.8">Türkmenistan</text>
<text x="331.0" y="103.8" font-size="5.6">Монгол</text>
<text x="320.5" y="112.8" font-size="5.6">улс</text>
<text x="308.6" y="153.6" font-size="5.2">中国</text>
<text x="165.1" y="174.9" font-size="5.8">ایران</text>
<text x="135.0" y="170.6" font-size="6.2">العراق</text>
<text x="130.4" y="204.8" font-size="5.8">السعودية</text>
<text x="86.0" y="195.7" font-size="5.8">مصر</text>
<text x="46.7" y="197.3" font-size="5.8">ليبيا</text>
<text x="22.1" y="228.4" font-size="5.7">Niger</text>
<text x="50.4" y="235.0" font-size="5.7">Tchad تشاد</text>
<text x="86.0" y="235.5" font-size="5.8">السودان</text>
<text x="84.0" y="260.7" font-size="5.7">South Sudan</text>
<text x="14.5" y="257.0" font-size="5.7" text-anchor="start">eria</text>
<text x="142.4" y="266.0" font-size="5.7">Soomaaliya</text>
<text x="143.2" y="235.1" font-size="5.8">اليمن</text>
<text x="175.3" y="217.9" font-size="5.8">عمان</text>
<text x="214.8" y="182.4" font-size="5.6">پاکستان</text>
<text x="201.6" y="169.6" font-size="5.6">افغانستان</text>
<text x="342.0" y="234.3" font-size="5.7">Việt Nam</text>
<text x="317.0" y="243.4" font-size="5.4">ประเทศไทย</text>
<text x="387.5" y="242.8" font-size="5.7">Philippines</text>
</g>
<g font-family="'Liberation Sans',sans-serif" font-weight="bold" font-size="6.3" text-anchor="middle">
<circle cx="49.1" cy="125.2" r="8.4" fill="#00e400" fill-opacity=".55"/><circle cx="49.1" cy="125.2" r="7" fill="#00e400" fill-opacity=".62"/>
<text x="49.1" y="127.5" fill="#2a2a2a" stroke="#fff" stroke-width="2.2" stroke-linejoin="round" paint-order="stroke">11</text>
<circle cx="58.6" cy="131.3" r="8.4" fill="#ff7e00" fill-opacity=".55"/><circle cx="58.6" cy="131.3" r="7" fill="#ff7e00" fill-opacity=".62"/>
<text x="58.6" y="133.7" fill="#2a2a2a" stroke="#fff" stroke-width="2.2" stroke-linejoin="round" paint-order="stroke">117</text>
<circle cx="106.7" cy="174.5" r="8.4" fill="#999999" fill-opacity=".55"/><circle cx="106.7" cy="174.5" r="7" fill="#999999" fill-opacity=".62"/>
<text x="106.7" y="176.8" fill="#2a2a2a" stroke="#fff" stroke-width="2.2" stroke-linejoin="round" paint-order="stroke">N/A</text>
<circle cx="133.9" cy="169.5" r="8.4" fill="#ff7e00" fill-opacity=".55"/><circle cx="133.9" cy="169.5" r="7" fill="#ff7e00" fill-opacity=".62"/>
<text x="133.9" y="171.8" fill="#2a2a2a" stroke="#fff" stroke-width="2.2" stroke-linejoin="round" paint-order="stroke">112</text>
<circle cx="141.1" cy="201.5" r="8.4" fill="#999999" fill-opacity=".55"/><circle cx="141.1" cy="201.5" r="7" fill="#999999" fill-opacity=".62"/>
<text x="141.1" y="203.8" fill="#2a2a2a" stroke="#fff" stroke-width="2.2" stroke-linejoin="round" paint-order="stroke">N/A</text>
<circle cx="153.6" cy="195.9" r="8.4" fill="#ff7e00" fill-opacity=".55"/><circle cx="153.6" cy="195.9" r="7" fill="#ff7e00" fill-opacity=".62"/>
<text x="153.6" y="198.2" fill="#2a2a2a" stroke="#fff" stroke-width="2.2" stroke-linejoin="round" paint-order="stroke">102</text>
<circle cx="146.1" cy="184.7" r="8.4" fill="#ffff00" fill-opacity=".55"/><circle cx="146.1" cy="184.7" r="7" fill="#ffff00" fill-opacity=".62"/>
<text x="146.1" y="187.0" fill="#2a2a2a" stroke="#fff" stroke-width="2.2" stroke-linejoin="round" paint-order="stroke">63</text>
<circle cx="165.9" cy="202.0" r="8.4" fill="#00e400" fill-opacity=".55"/><circle cx="165.9" cy="202.0" r="7" fill="#00e400" fill-opacity=".62"/>
<text x="165.9" y="204.3" fill="#2a2a2a" stroke="#fff" stroke-width="2.2" stroke-linejoin="round" paint-order="stroke">50</text>
<circle cx="169.6" cy="199.1" r="8.4" fill="#ffff00" fill-opacity=".55"/><circle cx="169.6" cy="199.1" r="7" fill="#ffff00" fill-opacity=".62"/>
<text x="169.6" y="201.4" fill="#2a2a2a" stroke="#fff" stroke-width="2.2" stroke-linejoin="round" paint-order="stroke">53</text>
<circle cx="116.8" cy="212.4" r="8.4" fill="#ff0000" fill-opacity=".55"/><circle cx="116.8" cy="212.4" r="7" fill="#ff0000" fill-opacity=".62"/>
<text x="116.8" y="214.8" fill="#2a2a2a" stroke="#fff" stroke-width="2.2" stroke-linejoin="round" paint-order="stroke">181</text>
<circle cx="95.3" cy="233.0" r="8.4" fill="#a5815c" fill-opacity=".55"/><circle cx="95.3" cy="233.0" r="7" fill="#a5815c" fill-opacity=".62"/>
<text x="95.3" y="235.3" fill="#2a2a2a" stroke="#fff" stroke-width="2.2" stroke-linejoin="round" paint-order="stroke">N/A</text>
<circle cx="38.7" cy="243.8" r="8.4" fill="#4c0026" fill-opacity=".55"/><circle cx="38.7" cy="243.8" r="7" fill="#4c0026" fill-opacity=".62"/>
<text x="38.7" y="246.2" fill="#2a2a2a" stroke="#fff" stroke-width="2.2" stroke-linejoin="round" paint-order="stroke">315</text>
<circle cx="113.4" cy="254.3" r="8.4" fill="#00e400" fill-opacity=".55"/><circle cx="113.4" cy="254.3" r="7" fill="#00e400" fill-opacity=".62"/>
<text x="113.4" y="256.7" fill="#2a2a2a" stroke="#fff" stroke-width="2.2" stroke-linejoin="round" paint-order="stroke">147</text>
<circle cx="115.6" cy="254.0" r="8.4" fill="#00e400" fill-opacity=".55"/><circle cx="115.6" cy="254.0" r="7" fill="#00e400" fill-opacity=".62"/>
<text x="115.6" y="256.4" fill="#2a2a2a" stroke="#fff" stroke-width="2.2" stroke-linejoin="round" paint-order="stroke">47</text>
<circle cx="179.2" cy="151.1" r="8.4" fill="#00e400" fill-opacity=".55"/><circle cx="179.2" cy="151.1" r="7" fill="#00e400" fill-opacity=".62"/>
<text x="179.2" y="153.4" fill="#2a2a2a" stroke="#fff" stroke-width="2.2" stroke-linejoin="round" paint-order="stroke">35</text>
<circle cx="212.9" cy="148.5" r="8.4" fill="#00e400" fill-opacity=".55"/><circle cx="212.9" cy="148.5" r="7" fill="#00e400" fill-opacity=".62"/>
<text x="212.9" y="150.8" fill="#2a2a2a" stroke="#fff" stroke-width="2.2" stroke-linejoin="round" paint-order="stroke">48</text>
<circle cx="214.9" cy="136.0" r="8.4" fill="#ffff00" fill-opacity=".55"/><circle cx="214.9" cy="136.0" r="7" fill="#ffff00" fill-opacity=".62"/>
<text x="214.9" y="138.3" fill="#2a2a2a" stroke="#fff" stroke-width="2.2" stroke-linejoin="round" paint-order="stroke">66</text>
<circle cx="230.8" cy="130.6" r="8.4" fill="#4c0026" fill-opacity=".55"/><circle cx="230.8" cy="130.6" r="7" fill="#4c0026" fill-opacity=".62"/>
<text x="230.8" y="132.9" fill="#2a2a2a" stroke="#fff" stroke-width="2.2" stroke-linejoin="round" paint-order="stroke">454</text>
<circle cx="239.9" cy="129.2" r="8.4" fill="#ffff00" fill-opacity=".55"/><circle cx="239.9" cy="129.2" r="7" fill="#ffff00" fill-opacity=".62"/>
<text x="239.9" y="131.5" fill="#2a2a2a" stroke="#fff" stroke-width="2.2" stroke-linejoin="round" paint-order="stroke">54</text>
<circle cx="214.0" cy="164.9" r="8.4" fill="#999999" fill-opacity=".55"/><circle cx="214.0" cy="164.9" r="7" fill="#999999" fill-opacity=".62"/>
<text x="214.0" y="167.2" fill="#2a2a2a" stroke="#fff" stroke-width="2.2" stroke-linejoin="round" paint-order="stroke">N/A</text>
<circle cx="223.6" cy="166.8" r="8.4" fill="#ff0000" fill-opacity=".55"/><circle cx="223.6" cy="166.8" r="7" fill="#ff0000" fill-opacity=".62"/>
<text x="223.6" y="169.2" fill="#2a2a2a" stroke="#fff" stroke-width="2.2" stroke-linejoin="round" paint-order="stroke">165</text>
<circle cx="228.4" cy="167.3" r="8.4" fill="#ff0000" fill-opacity=".55"/><circle cx="228.4" cy="167.3" r="7" fill="#ff0000" fill-opacity=".62"/>
<text x="228.4" y="169.7" fill="#2a2a2a" stroke="#fff" stroke-width="2.2" stroke-linejoin="round" paint-order="stroke">154</text>
<circle cx="231.6" cy="176.1" r="8.4" fill="#ff0000" fill-opacity=".55"/><circle cx="231.6" cy="176.1" r="7" fill="#ff0000" fill-opacity=".62"/>
<text x="231.6" y="178.4" fill="#2a2a2a" stroke="#fff" stroke-width="2.2" stroke-linejoin="round" paint-order="stroke">186</text>
<circle cx="240.5" cy="186.6" r="8.4" fill="#99004c" fill-opacity=".55"/><circle cx="240.5" cy="186.6" r="7" fill="#99004c" fill-opacity=".62"/>
<text x="240.5" y="188.9" fill="#2a2a2a" stroke="#fff" stroke-width="2.2" stroke-linejoin="round" paint-order="stroke">264</text>
<circle cx="267.1" cy="190.2" r="8.4" fill="#ff0000" fill-opacity=".55"/><circle cx="267.1" cy="190.2" r="7" fill="#ff0000" fill-opacity=".62"/>
<text x="267.1" y="192.5" fill="#2a2a2a" stroke="#fff" stroke-width="2.2" stroke-linejoin="round" paint-order="stroke">166</text>
<circle cx="207.8" cy="200.5" r="8.4" fill="#ffff00" fill-opacity=".55"/><circle cx="207.8" cy="200.5" r="7" fill="#ffff00" fill-opacity=".62"/>
<text x="207.8" y="202.8" fill="#2a2a2a" stroke="#fff" stroke-width="2.2" stroke-linejoin="round" paint-order="stroke">93</text>
<circle cx="277.2" cy="208.1" r="8.4" fill="#99004c" fill-opacity=".55"/><circle cx="277.2" cy="208.1" r="7" fill="#99004c" fill-opacity=".62"/>
<text x="277.2" y="210.4" fill="#2a2a2a" stroke="#fff" stroke-width="2.2" stroke-linejoin="round" paint-order="stroke">237</text>
<circle cx="284.4" cy="203.6" r="8.4" fill="#999999" fill-opacity=".55"/><circle cx="284.4" cy="203.6" r="7" fill="#999999" fill-opacity=".62"/>
<text x="284.4" y="205.9" fill="#2a2a2a" stroke="#fff" stroke-width="2.2" stroke-linejoin="round" paint-order="stroke">N/A</text>
<circle cx="227.1" cy="221.0" r="8.4" fill="#ff0000" fill-opacity=".55"/><circle cx="227.1" cy="221.0" r="7" fill="#ff0000" fill-opacity=".62"/>
<text x="227.1" y="223.3" fill="#2a2a2a" stroke="#fff" stroke-width="2.2" stroke-linejoin="round" paint-order="stroke">194</text>
<circle cx="244.5" cy="226.6" r="8.4" fill="#ff0000" fill-opacity=".55"/><circle cx="244.5" cy="226.6" r="7" fill="#ff0000" fill-opacity=".62"/>
<text x="244.5" y="228.9" fill="#2a2a2a" stroke="#fff" stroke-width="2.2" stroke-linejoin="round" paint-order="stroke">162</text>
<circle cx="250.6" cy="241.0" r="8.4" fill="#ffff00" fill-opacity=".55"/><circle cx="250.6" cy="241.0" r="7" fill="#ffff00" fill-opacity=".62"/>
<text x="250.6" y="243.3" fill="#2a2a2a" stroke="#fff" stroke-width="2.2" stroke-linejoin="round" paint-order="stroke">76</text>
<circle cx="249.1" cy="261.4" r="8.4" fill="#00e400" fill-opacity=".55"/><circle cx="249.1" cy="261.4" r="7" fill="#00e400" fill-opacity=".62"/>
<text x="249.1" y="263.8" fill="#2a2a2a" stroke="#fff" stroke-width="2.2" stroke-linejoin="round" paint-order="stroke">47</text>
<circle cx="302.3" cy="228.3" r="8.4" fill="#ff0000" fill-opacity=".55"/><circle cx="302.3" cy="228.3" r="7" fill="#ff0000" fill-opacity=".62"/>
<text x="302.3" y="230.7" fill="#2a2a2a" stroke="#fff" stroke-width="2.2" stroke-linejoin="round" paint-order="stroke">155</text>
<circle cx="323.4" cy="224.5" r="8.4" fill="#ff0000" fill-opacity=".55"/><circle cx="323.4" cy="224.5" r="7" fill="#ff0000" fill-opacity=".62"/>
<text x="323.4" y="226.8" fill="#2a2a2a" stroke="#fff" stroke-width="2.2" stroke-linejoin="round" paint-order="stroke">163</text>
<circle cx="333.8" cy="213.9" r="8.4" fill="#ff0000" fill-opacity=".55"/><circle cx="333.8" cy="213.9" r="7" fill="#ff0000" fill-opacity=".62"/>
<text x="333.8" y="216.2" fill="#2a2a2a" stroke="#fff" stroke-width="2.2" stroke-linejoin="round" paint-order="stroke">157</text>
<circle cx="336.8" cy="248.8" r="8.4" fill="#ffff00" fill-opacity=".55"/><circle cx="336.8" cy="248.8" r="7" fill="#ffff00" fill-opacity=".62"/>
<text x="336.8" y="251.2" fill="#2a2a2a" stroke="#fff" stroke-width="2.2" stroke-linejoin="round" paint-order="stroke">83</text>
<circle cx="358.1" cy="206.6" r="8.4" fill="#ffff00" fill-opacity=".55"/><circle cx="358.1" cy="206.6" r="7" fill="#ffff00" fill-opacity=".62"/>
<text x="358.1" y="208.9" fill="#2a2a2a" stroke="#fff" stroke-width="2.2" stroke-linejoin="round" paint-order="stroke">62</text>
<circle cx="384.4" cy="177.8" r="8.4" fill="#ffff00" fill-opacity=".55"/><circle cx="384.4" cy="177.8" r="7" fill="#ffff00" fill-opacity=".62"/>
<text x="384.4" y="180.2" fill="#2a2a2a" stroke="#fff" stroke-width="2.2" stroke-linejoin="round" paint-order="stroke">96</text>
<circle cx="368.8" cy="142.3" r="8.4" fill="#ff0000" fill-opacity=".55"/><circle cx="368.8" cy="142.3" r="7" fill="#ff0000" fill-opacity=".62"/>
<text x="368.8" y="144.7" fill="#2a2a2a" stroke="#fff" stroke-width="2.2" stroke-linejoin="round" paint-order="stroke">163</text>
<circle cx="391.5" cy="134.8" r="8.4" fill="#ff0000" fill-opacity=".55"/><circle cx="391.5" cy="134.8" r="7" fill="#ff0000" fill-opacity=".62"/>
<text x="391.5" y="137.2" fill="#2a2a2a" stroke="#fff" stroke-width="2.2" stroke-linejoin="round" paint-order="stroke">173</text>
<circle cx="337.6" cy="106.6" r="8.4" fill="#99004c" fill-opacity=".55"/><circle cx="337.6" cy="106.6" r="7" fill="#99004c" fill-opacity=".62"/>
<text x="337.6" y="108.9" fill="#2a2a2a" stroke="#fff" stroke-width="2.2" stroke-linejoin="round" paint-order="stroke">290</text>
</g>
<defs><filter id="ps" x="-20%" y="-20%" width="140%" height="150%"><feGaussianBlur in="SourceAlpha" stdDeviation="2.6"/><feOffset dy="1.6"/><feComponentTransfer><feFuncA type="linear" slope=".42"/></feComponentTransfer><feMerge><feMergeNode/><feMergeNode in="SourceGraphic"/></feMerge></filter></defs>
<g filter="url(#ps)"><rect x="203.9" y="39.6" width="91.8" height="76.5" rx="6.6" fill="#fff"/><path d="M224.8 116L238.4 116L231.6 122.6Z" fill="#fff"/></g>
<g font-family="'Liberation Sans',sans-serif" font-size="8" text-anchor="middle" fill="#333">
<text x="249.7" y="54.7">Bishkek</text><text x="249.7" y="63.3">2021-01-22 8:00 AM</text><text x="249.7" y="71.9">(LT)</text>
<rect x="212" y="74.1" width="74.7" height="33.5" fill="#fff" stroke="#004a83" stroke-width=".9"/>
<rect x="212" y="74.1" width="74.7" height="16.2" fill="#004a83"/>
<rect x="259.5" y="90.3" width="27.2" height="17.3" fill="#4c0026"/>
<line x1="259.5" x2="259.5" y1="90.3" y2="107.6" stroke="#004a83" stroke-width=".7"/>
<text x="235.8" y="84.4" fill="#fff" font-weight="bold">Pollutant</text><text x="273.2" y="84.4" fill="#fff" font-weight="bold">AQI</text>
<text x="235.8" y="100" fill="#444">PM2.5</text><text x="273.2" y="100" fill="#fff" font-weight="bold">454</text>
</g>
</svg>
</div>

<!-- right column -->
<div class="abs ph" style="left:434px;top:5px;width:190px;height:19.5px;">Select a City</div>
<div class="abs sel" style="left:433.5px;top:25.6px;width:191.5px;height:21px;line-height:18px;">Bishkek<span class="x">×</span><span class="a"></span></div>
<div class="abs ph" style="left:434px;top:59px;width:190px;height:19.5px;">Select a Parameter</div>
<div class="abs sel" style="left:433.5px;top:79.6px;width:191.5px;height:21px;line-height:18px;">PM2.5<span class="x">×</span><span class="a"></span></div>

<div class="abs" style="left:433.5px;top:111.5px;width:191.5px;height:42px;box-sizing:border-box;background:#fff;border:.6px solid #ccc;"></div>
<div class="abs" style="left:439.5px;top:118.5px;font-size:8px;line-height:9px;font-weight:bold;color:#222;">Bishkek</div>
<svg class="abs" style="left:598.2px;top:127.2px" width="19.8" height="19.8" viewBox="0 0 20 20">
<rect width="20" height="20" fill="#f3b43c"/>
<circle cx="4.5" cy="15.9" r="1.9" fill="#fff"/>
<path d="M3.2 8.6 a8.2 8.2 0 0 1 8.2 8.2" fill="none" stroke="#fff" stroke-width="2.2" stroke-linecap="round"/>
<path d="M3.2 3.7 a13.1 13.1 0 0 1 13.1 13.1" fill="none" stroke="#fff" stroke-width="2.2" stroke-linecap="round"/>
</svg>

<div id="note" class="abs">Note: Values above 500 are considered Beyond the AQI. Follow<br>recommendations for the Hazardous category. Additional information<br>on reducing exposure to extremely high levels of particle pollution is<br>available <b>here</b>.</div>

<!-- tabs -->
<div class="abs" style="left:14.5px;top:289.2px;width:593.5px;height:.7px;background:#d0d0d0;"></div>
<div class="abs tab" style="left:14.5px;width:61.5px;background:#fff;border:.6px solid #c8c8c8;border-top:1.1px solid #004a83;border-bottom:none;color:#333;height:17.8px;">AQI</div>
<div class="abs tab" style="left:78px;width:95px;">Concentration</div>
<div class="abs tab" style="left:175px;width:78px;">Historical</div>

<div id="learn" class="abs">Learn more about how the Air Quality Index [AQI] is calculated from the EPA <u>here</u>.</div>

<div id="chart" class="abs">
<svg class="abs" style="left:0;top:0" width="456.5" height="182" viewBox="0 0 456.5 182" font-family="'DejaVu Sans',Verdana,sans-serif">
<text x="229.0" y="13.3" font-size="10" fill="#2a2a2a" text-anchor="middle">Bishkek – PM2.5</text>
<line x1="43.4" x2="451.6" y1="118.80" y2="118.80" stroke="#ebebeb" stroke-width=".7"/>
<line x1="43.4" x2="451.6" y1="98.10" y2="98.10" stroke="#ebebeb" stroke-width=".7"/>
<line x1="43.4" x2="451.6" y1="77.40" y2="77.40" stroke="#ebebeb" stroke-width=".7"/>
<line x1="43.4" x2="451.6" y1="56.70" y2="56.70" stroke="#ebebeb" stroke-width=".7"/>
<line x1="43.4" x2="451.6" y1="36.00" y2="36.00" stroke="#ebebeb" stroke-width=".7"/>
<text x="34.1" y="141.10" font-size="6.3" font-family="Liberation Sans,sans-serif" font-weight="bold" fill="#222" text-anchor="end">0</text>
<text x="34.1" y="120.40" font-size="6.3" font-family="Liberation Sans,sans-serif" font-weight="bold" fill="#222" text-anchor="end">100</text>
<text x="34.1" y="99.70" font-size="6.3" font-family="Liberation Sans,sans-serif" font-weight="bold" fill="#222" text-anchor="end">200</text>
<text x="34.1" y="79.00" font-size="6.3" font-family="Liberation Sans,sans-serif" font-weight="bold" fill="#222" text-anchor="end">300</text>
<text x="34.1" y="58.30" font-size="6.3" font-family="Liberation Sans,sans-serif" font-weight="bold" fill="#222" text-anchor="end">400</text>
<text x="34.1" y="37.60" font-size="6.3" font-family="Liberation Sans,sans-serif" font-weight="bold" fill="#222" text-anchor="end">500</text>
<text transform="translate(17.2 84.5) rotate(-90)" font-size="7.2" fill="#222" text-anchor="middle">AQI</text>
<line x1="43.40" x2="43.40" y1="139.5" y2="143.1" stroke="#dfe4ee" stroke-width=".7"/>
<line x1="60.40" x2="60.40" y1="139.5" y2="143.1" stroke="#dfe4ee" stroke-width=".7"/>
<line x1="77.40" x2="77.40" y1="139.5" y2="143.1" stroke="#dfe4ee" stroke-width=".7"/>
<line x1="94.40" x2="94.40" y1="139.5" y2="143.1" stroke="#dfe4ee" stroke-width=".7"/>
<line x1="111.40" x2="111.40" y1="139.5" y2="143.1" stroke="#dfe4ee" stroke-width=".7"/>
<line x1="128.40" x2="128.40" y1="139.5" y2="143.1" stroke="#dfe4ee" stroke-width=".7"/>
<line x1="145.40" x2="145.40" y1="139.5" y2="143.1" stroke="#dfe4ee" stroke-width=".7"/>
<line x1="162.40" x2="162.40" y1="139.5" y2="143.1" stroke="#dfe4ee" stroke-width=".7"/>
<line x1="179.40" x2="179.40" y1="139.5" y2="143.1" stroke="#dfe4ee" stroke-width=".7"/>
<line x1="196.40" x2="196.40" y1="139.5" y2="143.1" stroke="#dfe4ee" stroke-width=".7"/>
<line x1="213.40" x2="213.40" y1="139.5" y2="143.1" stroke="#dfe4ee" stroke-width=".7"/>
<line x1="230.40" x2="230.40" y1="139.5" y2="143.1" stroke="#dfe4ee" stroke-width=".7"/>
<line x1="247.40" x2="247.40" y1="139.5" y2="143.1" stroke="#dfe4ee" stroke-width=".7"/>
<line x1="264.40" x2="264.40" y1="139.5" y2="143.1" stroke="#dfe4ee" stroke-width=".7"/>
<line x1="281.40" x2="281.40" y1="139.5" y2="143.1" stroke="#dfe4ee" stroke-width=".7"/>
<line x1="298.40" x2="298.40" y1="139.5" y2="143.1" stroke="#dfe4ee" stroke-width=".7"/>
<line x1="315.40" x2="315.40" y1="139.5" y2="143.1" stroke="#dfe4ee" stroke-width=".7"/>
<line x1="332.40" x2="332.40" y1="139.5" y2="143.1" stroke="#dfe4ee" stroke-width=".7"/>
<line x1="349.40" x2="349.40" y1="139.5" y2="143.1" stroke="#dfe4ee" stroke-width=".7"/>
<line x1="366.40" x2="366.40" y1="139.5" y2="143.1" stroke="#dfe4ee" stroke-width=".7"/>
<line x1="383.40" x2="383.40" y1="139.5" y2="143.1" stroke="#dfe4ee" stroke-width=".7"/>
<line x1="400.40" x2="400.40" y1="139.5" y2="143.1" stroke="#dfe4ee" stroke-width=".7"/>
<line x1="417.40" x2="417.40" y1="139.5" y2="143.1" stroke="#dfe4ee" stroke-width=".7"/>
<line x1="434.40" x2="434.40" y1="139.5" y2="143.1" stroke="#dfe4ee" stroke-width=".7"/>
<line x1="451.40" x2="451.40" y1="139.5" y2="143.1" stroke="#dfe4ee" stroke-width=".7"/>
<rect x="47.40" y="123.56" width="9.00" height="15.94" fill="#ffff00" stroke="#3a2a10" stroke-width=".55"/>
<rect x="64.40" y="124.60" width="9.00" height="14.90" fill="#ffff00" stroke="#3a2a10" stroke-width=".55"/>
<rect x="81.40" y="122.94" width="9.00" height="16.56" fill="#ffff00" stroke="#3a2a10" stroke-width=".55"/>
<rect x="98.40" y="126.67" width="9.00" height="12.83" fill="#ffff00" stroke="#3a2a10" stroke-width=".55"/>
<rect x="115.40" y="128.94" width="9.00" height="10.56" fill="#ffff00" stroke="#3a2a10" stroke-width=".55"/>
<rect x="132.40" y="108.24" width="9.00" height="31.26" fill="#ff0000" stroke="#3a2a10" stroke-width=".55"/>
<rect x="149.40" y="54.63" width="9.00" height="84.87" fill="#4c0026" stroke="#3a2a10" stroke-width=".55"/>
<rect x="166.40" y="54.63" width="9.00" height="84.87" fill="#4c0026" stroke="#3a2a10" stroke-width=".55"/>
<rect x="183.40" y="93.34" width="9.00" height="46.16" fill="#99004c" stroke="#3a2a10" stroke-width=".55"/>
<rect x="200.40" y="102.24" width="9.00" height="37.26" fill="#ff0000" stroke="#3a2a10" stroke-width=".55"/>
<rect x="217.40" y="78.85" width="9.00" height="60.65" fill="#99004c" stroke="#3a2a10" stroke-width=".55"/>
<rect x="234.40" y="57.11" width="9.00" height="82.39" fill="#4c0026" stroke="#3a2a10" stroke-width=".55"/>
<rect x="251.40" y="60.43" width="9.00" height="79.07" fill="#4c0026" stroke="#3a2a10" stroke-width=".55"/>
<rect x="268.40" y="85.47" width="9.00" height="54.03" fill="#99004c" stroke="#3a2a10" stroke-width=".55"/>
<rect x="285.40" y="85.47" width="9.00" height="54.03" fill="#99004c" stroke="#3a2a10" stroke-width=".55"/>
<rect x="302.40" y="101.20" width="9.00" height="38.29" fill="#ff0000" stroke="#3a2a10" stroke-width=".55"/>
<rect x="319.40" y="67.88" width="9.00" height="71.62" fill="#4c0026" stroke="#3a2a10" stroke-width=".55"/>
<rect x="336.40" y="76.37" width="9.00" height="63.13" fill="#4c0026" stroke="#3a2a10" stroke-width=".55"/>
<rect x="353.40" y="101.20" width="9.00" height="38.29" fill="#ff0000" stroke="#3a2a10" stroke-width=".55"/>
<rect x="370.40" y="108.04" width="9.00" height="31.46" fill="#ff0000" stroke="#3a2a10" stroke-width=".55"/>
<rect x="387.40" y="90.23" width="9.00" height="49.27" fill="#99004c" stroke="#3a2a10" stroke-width=".55"/>
<rect x="404.40" y="65.19" width="9.00" height="74.31" fill="#4c0026" stroke="#3a2a10" stroke-width=".55"/>
<rect x="421.40" y="34.55" width="9.00" height="104.95" fill="#4c0026" stroke="#3a2a10" stroke-width=".55"/>
<rect x="438.40" y="45.52" width="9.00" height="93.98" fill="#4c0026" stroke="#3a2a10" stroke-width=".55"/>
<line x1="43.4" x2="451.6" y1="139.50" y2="139.50" stroke="#dfe4ee" stroke-width=".8"/>
<text transform="translate(53.80 148.10) rotate(-45)" font-size="6.3" fill="#555" text-anchor="end">9 AM</text>
<text transform="translate(70.80 148.10) rotate(-45)" font-size="6.3" fill="#555" text-anchor="end">10 AM</text>
<text transform="translate(87.80 148.10) rotate(-45)" font-size="6.3" fill="#555" text-anchor="end">11 AM</text>
<text transform="translate(104.80 148.10) rotate(-45)" font-size="6.3" fill="#555" text-anchor="end">12 PM</text>
<text transform="translate(121.80 148.10) rotate(-45)" font-size="6.3" fill="#555" text-anchor="end">1 PM</text>
<text transform="translate(138.80 148.10) rotate(-45)" font-size="6.3" fill="#555" text-anchor="end">2 PM</text>
<text transform="translate(155.80 148.10) rotate(-45)" font-size="6.3" fill="#555" text-anchor="end">3 PM</text>
<text transform="translate(172.80 148.10) rotate(-45)" font-size="6.3" fill="#555" text-anchor="end">4 PM</text>
<text transform="translate(189.80 148.10) rotate(-45)" font-size="6.3" fill="#555" text-anchor="end">5 PM</text>
<text transform="translate(206.80 148.10) rotate(-45)" font-size="6.3" fill="#555" text-anchor="end">6 PM</text>
<text transform="translate(223.80 148.10) rotate(-45)" font-size="6.3" fill="#555" text-anchor="end">7 PM</text>
<text transform="translate(240.80 148.10) rotate(-45)" font-size="6.3" fill="#555" text-anchor="end">8 PM</text>
<text transform="translate(257.80 148.10) rotate(-45)" font-size="6.3" fill="#555" text-anchor="end">9 PM</text>
<text transform="translate(274.80 148.10) rotate(-45)" font-size="6.3" fill="#555" text-anchor="end">10 PM</text>
<text transform="translate(291.80 148.10) rotate(-45)" font-size="6.3" fill="#555" text-anchor="end">11 PM</text>
<text transform="translate(308.80 148.10) rotate(-45)" font-size="6.3" fill="#555" text-anchor="end">Jan 22, 2021 12 AM</text>
<text transform="translate(325.80 148.10) rotate(-45)" font-size="6.3" fill="#555" text-anchor="end">1 AM</text>
<text transform="translate(342.80 148.10) rotate(-45)" font-size="6.3" fill="#555" text-anchor="end">2 AM</text>
<text transform="translate(359.80 148.10) rotate(-45)" font-size="6.3" fill="#555" text-anchor="end">3 AM</text>
<text transform="translate(376.80 148.10) rotate(-45)" font-size="6.3" fill="#555" text-anchor="end">4 AM</text>
<text transform="translate(393.80 148.10) rotate(-45)" font-size="6.3" fill="#555" text-anchor="end">5 AM</text>
<text transform="translate(410.80 148.10) rotate(-45)" font-size="6.3" fill="#555" text-anchor="end">6 AM</text>
<text transform="translate(427.80 148.10) rotate(-45)" font-size="6.3" fill="#555" text-anchor="end">7 AM</text>
<text transform="translate(444.80 148.10) rotate(-45)" font-size="6.3" fill="#555" text-anchor="end">8 AM</text>
</svg>
</div>

<div id="cc" class="abs">
<div class="abs" style="left:0;top:0;width:100%;height:43.2px;background:#004a83;color:#fff;text-align:center;font-weight:bold;">
<div class="abs" style="left:0;width:100%;top:3.4px;font-size:8.6px;line-height:10px;">Current Conditions</div>
<div class="abs" style="left:0;width:100%;top:16.5px;font-size:6.9px;line-height:9px;">observed at</div>
<div class="abs" style="left:0;width:100%;top:28px;font-size:8.6px;line-height:10px;">Jan 22, 2021 8:00 AM (LT)</div>
</div>
<div class="abs" style="left:0;top:43.2px;width:100%;height:65px;background:#4c0026;color:#fff;text-align:center;font-weight:bold;font-size:11.46px;line-height:16.4px;">
<div style="margin-top:8.3px">454 AQI</div><div>Hazardous</div><div>PM2.5</div>
</div>
<div class="abs" style="left:0;top:114.3px;width:100%;text-align:center;font-weight:bold;font-size:6.9px;line-height:8px;color:#222;">Health Message</div>
<div class="abs" style="left:2.8px;top:126.4px;font-size:6.88px;line-height:12px;color:#555;white-space:nowrap;">AQI values over 300 trigger health warnings<br>of emergency conditions. The entire<br>population is even more likely to be affected<br>by serious health effects.</div>
</div>

</body>
</html>
